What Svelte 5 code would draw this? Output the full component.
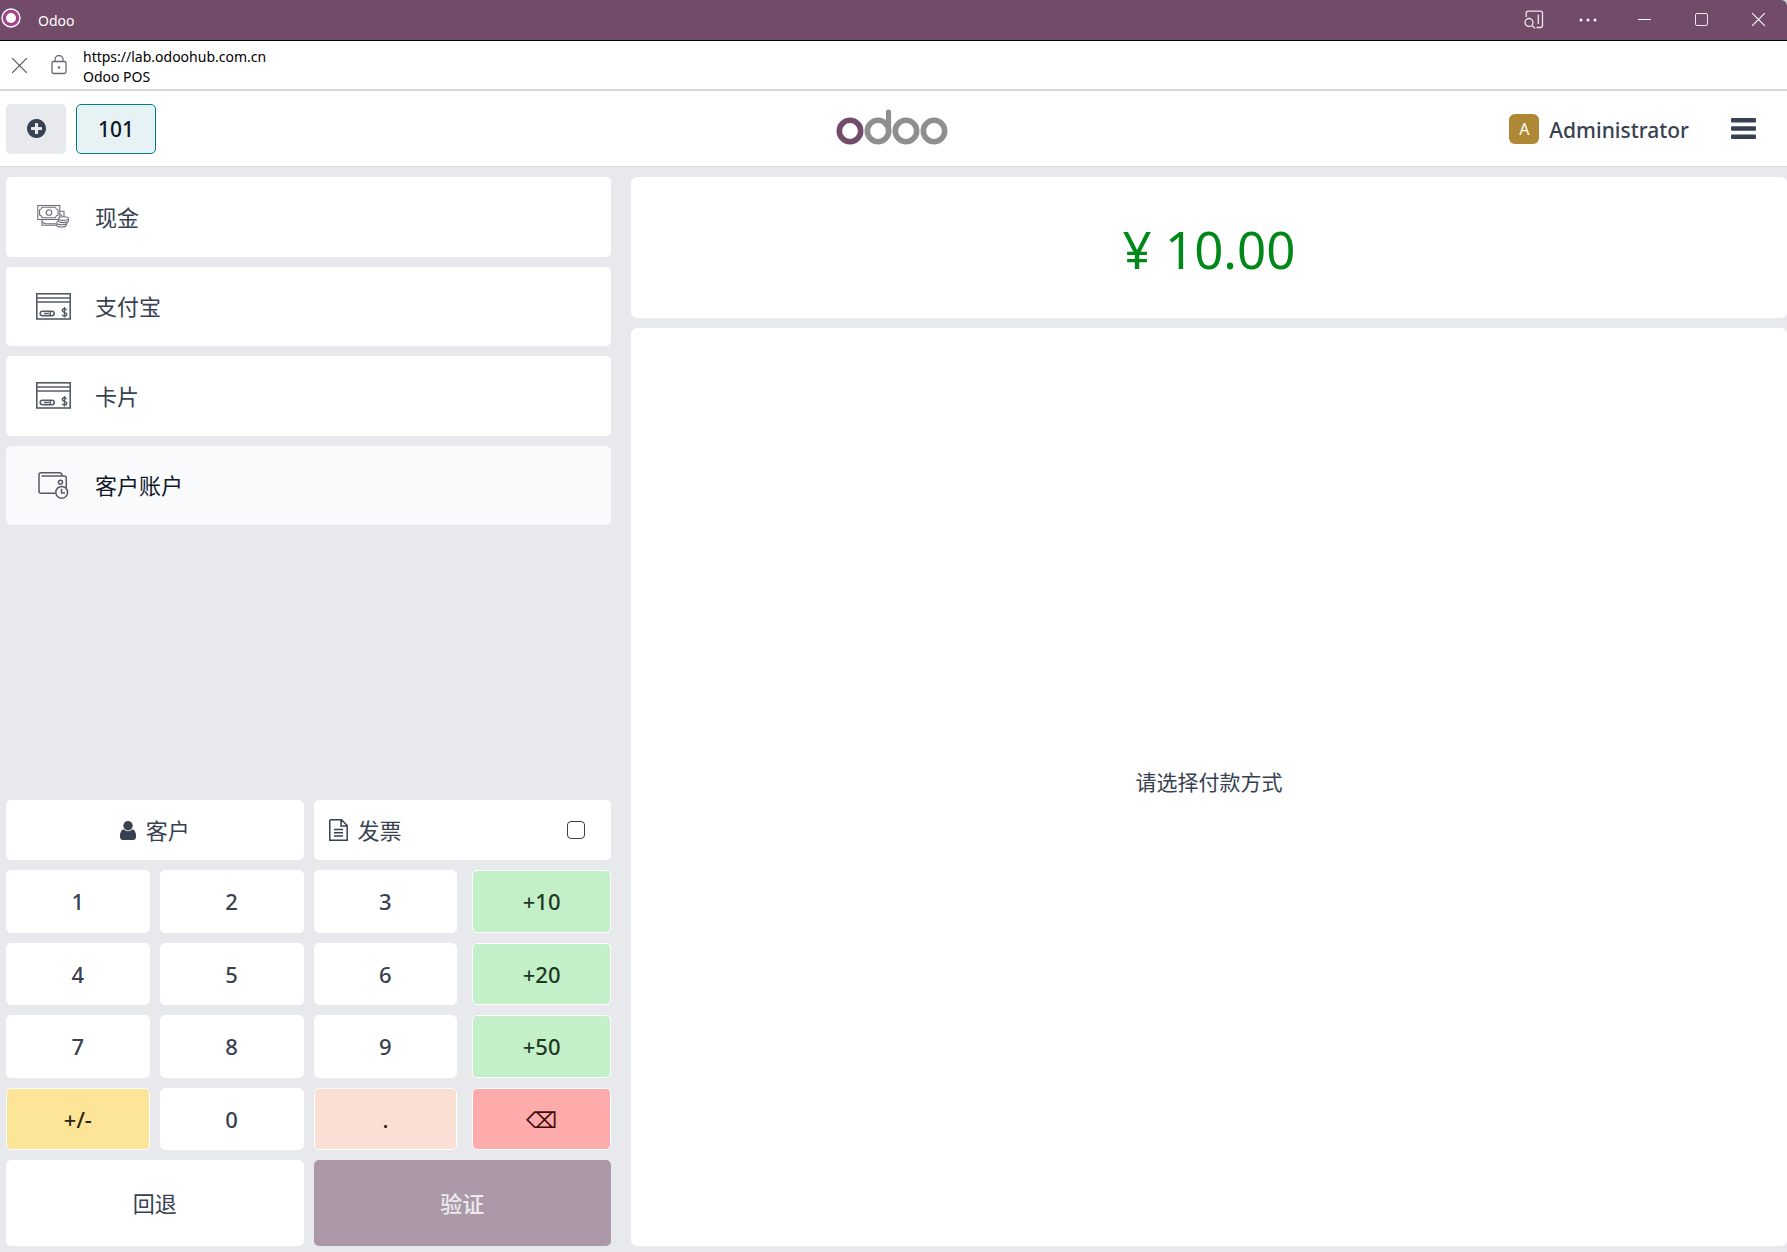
<script>
  const methods = [
    { name: '现金', icon: 'cash' },
    { name: '支付宝', icon: 'card' },
    { name: '卡片', icon: 'card' },
    { name: '客户账户', icon: 'wallet', active: true }
  ];
  const keys = [
    { label: '1' }, { label: '2' }, { label: '3' }, { label: '+10', tone: 'green' },
    { label: '4' }, { label: '5' }, { label: '6' }, { label: '+20', tone: 'green' },
    { label: '7' }, { label: '8' }, { label: '9' }, { label: '+50', tone: 'green' },
    { label: '+/-', tone: 'yellow' }, { label: '0' }, { label: '.', tone: 'peach' }, { label: '⌫', tone: 'red' }
  ];
  let invoice = $state(false);
</script>

<div class="window">
  <div class="titlebar">
    <svg class="app-icon" width="20" height="20" viewBox="0 0 20 20" aria-hidden="true">
      <circle cx="10" cy="10" r="9" fill="#a4418d" stroke="#fff" stroke-width="1.4" />
      <circle cx="10" cy="10" r="5" fill="#fff" />
    </svg>
    <span class="app-name">Odoo</span>
    <div class="window-buttons">
      <button class="narrow" aria-label="Search page">
        <svg width="20" height="20" viewBox="0 0 20 20" fill="none" stroke="#eee5eb" stroke-width="1.3">
          <path d="M2.2 7V3.2Q2.2 1.2 4.2 1.2H16.5Q18.5 1.2 18.5 3.2V15.5Q18.5 17.5 16.5 17.5H12.5M14.3 4.5V14" />
          <circle cx="5" cy="12.5" r="4" /><path d="M7.8 15.3L11 18.5" />
        </svg>
      </button>
      <button aria-label="More">
        <svg width="18" height="4" viewBox="0 0 18 4" fill="#fff"><circle cx="2" cy="2" r="1.5" /><circle cx="9" cy="2" r="1.5" /><circle cx="16" cy="2" r="1.5" /></svg>
      </button>
      <button aria-label="Minimize">
        <svg width="13" height="13" viewBox="0 0 13 13"><path d="M0 6.5H13" stroke="#fff" /></svg>
      </button>
      <button aria-label="Maximize">
        <svg width="13" height="13" viewBox="0 0 13 13"><rect x=".5" y=".5" width="12" height="12" rx="1.5" fill="none" stroke="#eee5eb" /></svg>
      </button>
      <button aria-label="Close">
        <svg width="13" height="13" viewBox="0 0 13 13"><path d="M0 0L13 13M13 0L0 13" stroke="#fff" stroke-width="1.1" /></svg>
      </button>
    </div>
  </div>

  <div class="addressbar">
    <button aria-label="Close tab">
      <svg width="15" height="15" viewBox="0 0 15 15"><path d="M0 0L15 15M15 0L0 15" stroke="#555" stroke-width="1.2" /></svg>
    </button>
    <button aria-label="Site information">
      <svg width="16" height="20" viewBox="0 0 16 20" fill="none" stroke="#666a70" stroke-width="1.3">
        <rect x="1" y="6.5" width="14" height="12" rx="1.8" /><path d="M4 6.5V4.5a4 4 0 0 1 8 0v2" /><circle cx="8" cy="12.5" r="1.3" fill="#666a70" stroke="none" />
      </svg>
    </button>
    <div class="address">
      <span>https://lab.odoohub.com.cn</span>
      <span>Odoo POS</span>
    </div>
  </div>

  <header>
    <div class="orders">
      <button class="new-order" aria-label="New order">
        <svg width="19" height="19" viewBox="0 0 1536 1536" fill="#374151"><path d="M1216 832v-128q0-26-19-45t-45-19h-256v-256q0-26-19-45t-45-19h-128q-26 0-45 19t-19 45v256h-256q-26 0-45 19t-19 45v128q0 26 19 45t45 19h256v256q0 26 19 45t45 19h128q26 0 45-19t19-45v-256h256q26 0 45-19t19-45zm320-64q0 209-103 385.5t-279.5 279.5-385.5 103-385.5-103-279.5-279.5-103-385.5 103-385.5 279.5-279.5 385.5-103 385.5 103 279.5 279.5 103 385.5z" /></svg>
      </button>
      <button class="order">101</button>
    </div>
    <svg class="logo" width="112" height="36" viewBox="0 0 112 36" fill="none" stroke-width="5.6" role="img" aria-label="Odoo">
      <circle cx="14" cy="22" r="10.7" stroke="#714b67" />
      <g stroke="#8f8f8f"><circle cx="42" cy="22" r="10.7" /><circle cx="70" cy="22" r="10.7" /><circle cx="98" cy="22" r="10.7" /><path d="M52.5 22V3" stroke-linecap="round" stroke-width="5.2" /></g>
    </svg>
    <div class="account">
      <button class="user"><span class="avatar">A</span><span class="user-name">Administrator</span></button>
      <button class="menu" aria-label="Menu">
        <svg width="25" height="21" viewBox="0 0 25 21" fill="#374151"><rect width="25" height="4.4" rx="1" /><rect y="8.3" width="25" height="4.4" rx="1" /><rect y="16.6" width="25" height="4.4" rx="1" /></svg>
      </button>
    </div>
  </header>

  <main>
    <section class="left">
      <div class="methods">
        {#each methods as m}
          <button class="method" class:active={m.active}>
            {#if m.icon === 'cash'}
              <svg width="35" height="27" viewBox="0 0 35 27" fill="none" stroke="#6b7078" stroke-width="1.1">
                <rect x="1.8" y="2.5" width="22" height="14" />
                <path d="M6 4.3H19.5Q19.8 6.5 22 7V12Q19.8 12.5 19.5 14.7H6Q5.8 12.5 3.6 12V7Q5.8 6.5 6 4.3Z" />
                <circle cx="13" cy="9.5" r="2.8" />
                <path d="M6 16.5V22.3H20M6 19L9 20.7H20M24 8.2H28V14M24.5 11L26 13" />
                <g fill="#fff"><ellipse cx="25.5" cy="22" rx="5" ry="2" /><ellipse cx="26" cy="19.8" rx="5.3" ry="2" /><ellipse cx="27.5" cy="17.6" rx="5.3" ry="2" /><ellipse cx="27.5" cy="15.6" rx="5" ry="1.8" /></g>
              </svg>
            {:else if m.icon === 'card'}
              <svg width="35" height="27" viewBox="0 0 35 27" fill="none" stroke="#555b66" stroke-width="1.6">
                <rect x=".8" y=".8" width="33.4" height="25.2" /><path d="M1 5H34M1 9H34" />
                <rect x="4.2" y="18.3" width="14" height="4.4" rx="2.2" /><path d="M8 20.5H13M14.3 18.3V22.7" />
                <path d="M30.5 17.2Q30 15.8 28.4 15.8Q26.3 15.8 26.3 17.6Q26.3 19 28.5 19.4Q30.8 19.8 30.8 21.3Q30.8 23 28.5 23Q26.6 23 26.2 21.6M28.5 14V24.5" stroke-width="1.4" />
              </svg>
            {:else}
              <svg width="35" height="27" viewBox="0 0 35 27" fill="none" stroke="#555b66" stroke-width="1.5">
                <path d="M19.5 21.2H5Q3 21.2 3 19.2V2.8Q3 .8 5 .8H23.5Q25.8 .8 25.8 2.8V4M5.5 4H28Q30.3 4 30.3 6.2V16" />
                <circle cx="24.5" cy="10.3" r="2" /><circle cx="25.7" cy="20.3" r="5.9" /><path d="M25.5 16.8V21H29" />
              </svg>
            {/if}
            <span>{m.name}</span>
          </button>
        {/each}
      </div>

      <div class="controls">
        <div class="pair">
          <button class="customer">
            <svg width="16" height="19" viewBox="0 0 16 19" fill="#374151"><circle cx="8" cy="4.8" r="4.7" /><path d="M3.6 8.2Q8 12.4 12.4 8.2Q16 9 16 15.5Q16 19 13 19H3Q0 19 0 15.5Q0 9 3.6 8.2Z" /></svg>
            客户
          </button>
          <label class="invoice">
            <svg width="19" height="22" viewBox="0 0 19 22" fill="none" stroke="#374151" stroke-width="1.5"><path d="M1 .8H12.5L18.2 6.5V21.2H.8V.8M12 1V7H18M5 10.5H14M5 13.7H14M5 17H14" /></svg>
            <span>发票</span>
            <input type="checkbox" bind:checked={invoice} />
          </label>
        </div>
        <div class="numpad">
          {#each keys as k}
            <button class={k.tone}>{k.label}</button>
          {/each}
        </div>
        <div class="pair actions">
          <button>回退</button>
          <button class="validate" disabled>验证</button>
        </div>
      </div>
    </section>

    <section class="right">
      <div class="total">¥ 10.00</div>
      <div class="prompt">请选择付款方式</div>
    </section>
  </main>
</div>

<style>
  :global(body) {
    margin: 0;
    background: #d0d0d4;
  }
  .window {
    display: flex;
    flex-direction: column;
    min-height: 100vh;
    font: 22px/32px 'Noto Sans', 'Noto Sans CJK SC', sans-serif;
    color: #374151;
  }
  .window, .window * {
    box-sizing: border-box;
  }
  button {
    display: flex;
    align-items: center;
    justify-content: center;
    padding: 0;
    border: 0;
    background: none;
    color: inherit;
    font: inherit;
  }
  svg {
    display: block;
    flex: none;
  }
  .titlebar {
    display: flex;
    height: 41px;
    background: #714b67;
    border-bottom: 1px solid #000;
    border-top-right-radius: 6px;
    color: #fff;
    font-size: 14px;
  }
  .app-icon {
    margin: 8px 17px 0 1px;
  }
  .app-name {
    line-height: 41px;
  }
  .window-buttons {
    display: flex;
    margin-left: auto;
    padding-bottom: 1px;
  }
  .window-buttons button {
    width: 57px;
  }
  .window-buttons .narrow {
    width: 50px;
  }
  .addressbar {
    display: flex;
    align-items: center;
    height: 50px;
    background: #fff;
    border-bottom: 2px solid #d8d8d8;
  }
  .addressbar button {
    width: 39px;
    height: 40px;
  }
  .address {
    display: flex;
    flex-direction: column;
    padding: 4px 0 0 5px;
    color: #000;
    font-size: 14px;
    line-height: 20px;
  }
  header {
    display: grid;
    grid-template-columns: 1fr auto 1fr;
    align-items: center;
    height: 76px;
    padding: 0 31px 0 6px;
    background: #fff;
    border-bottom: 1px solid #d8dadd;
  }
  .orders {
    display: flex;
    gap: 10px;
  }
  .orders button {
    height: 50px;
    border-radius: 5px;
  }
  .orders .new-order {
    width: 60px;
    background: #e7e9ed;
  }
  .orders .order {
    width: 80px;
    background: #e6f2f3;
    border: 1px solid #017e84;
    color: #111827;
    font-size: 21px;
    font-weight: 500;
  }
  .logo {
    margin: 0 0 4px 21px;
  }
  .account {
    display: flex;
    justify-content: flex-end;
    gap: 42px;
  }
  .user {
    gap: 10px;
    font-size: 21px;
    font-weight: 500;
  }
  .user-name {
    padding-top: 2px;
  }
  .avatar {
    width: 30px;
    height: 30px;
    border-radius: 6px;
    background: #ae8834;
    color: #fff;
    font-size: 16px;
    font-weight: 400;
    line-height: 30px;
  }
  main {
    display: grid;
    grid-template-columns: 605fr 1156fr;
    gap: 20px;
    flex: 1;
    padding: 10px 0 6px 6px;
    background: #e7e9ed;
  }
  .left {
    display: flex;
    flex-direction: column;
    justify-content: space-between;
    gap: 20px;
  }
  .methods {
    display: grid;
    grid-template-rows: repeat(4, 1fr);
    gap: 10px;
    height: 348px;
  }
  .method {
    justify-content: flex-start;
    gap: 24px;
    padding-left: 30px;
    border-radius: 5px;
    background: #fff;
  }
  .method.active {
    background: #f9fafb;
    color: #111827;
  }
  .controls {
    display: grid;
    gap: 10px;
  }
  .pair {
    display: grid;
    grid-template-columns: 1fr 1fr;
    gap: 10px;
    height: 60px;
  }
  .pair > *, .numpad button {
    border-radius: 5px;
    background: #fff;
  }
  .customer {
    gap: 10px;
  }
  .invoice {
    display: flex;
    align-items: center;
    gap: 10px;
    padding: 0 26px 0 15px;
  }
  .invoice input {
    appearance: none;
    width: 18px;
    height: 18px;
    margin: 0 0 0 auto;
    border: 1px solid #374151;
    border-radius: 4px;
    background: #fff;
  }
  .invoice input:checked {
    background: #714b67;
  }
  .numpad {
    display: grid;
    grid-template-columns: repeat(4, 1fr);
    grid-template-rows: repeat(4, 1fr);
    gap: 10px;
    height: 280px;
  }
  .numpad button {
    border: 1px solid #fff;
    font-weight: 500;
  }
  .numpad button:nth-child(4n) {
    margin-left: 5px;
  }
  .numpad .green {
    background: #c4f0c9;
    color: #1f3a24;
  }
  .numpad .yellow {
    background: #fde597;
    color: #2b2410;
  }
  .numpad .peach {
    background: #fbdfd4;
    color: #4a2013;
  }
  .numpad .red {
    background: #ffaaab;
    color: #3d0a0b;
  }
  .pair.actions {
    height: 86px;
  }
  .pair .validate {
    background: #ab99a9;
    color: #eeeaee;
    font-weight: 500;
  }
  .right {
    display: flex;
    flex-direction: column;
    gap: 10px;
  }
  .total, .prompt {
    display: flex;
    align-items: center;
    justify-content: center;
    border-radius: 6px;
    background: #fff;
  }
  .total {
    height: 141px;
    padding-top: 2px;
    color: #008818;
    font-size: 51px;
    line-height: 76px;
  }
  .prompt {
    flex: 1;
    padding-bottom: 10px;
    font-size: 21px;
  }
</style>
